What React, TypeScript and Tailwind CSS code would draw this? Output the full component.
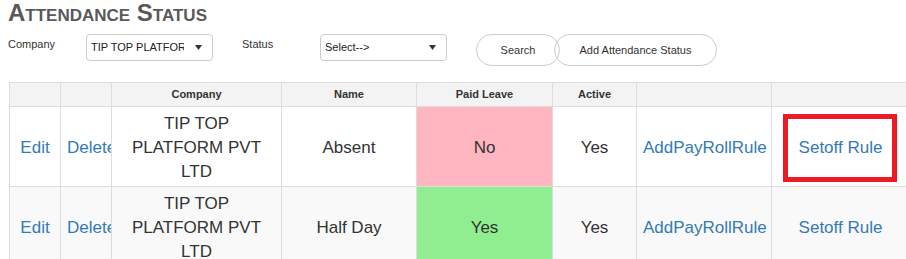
import React from "react";

const rows = [
  { name: "Absent", paid: "No", paidBg: "bg-[#ffb6c1]", rowBg: "bg-white", marked: true },
  { name: "Half Day", paid: "Yes", paidBg: "bg-[#90ee90]", rowBg: "bg-[#f9f9f9]", marked: false },
];

const Caret = () => (
  <svg width="7" height="5" viewBox="0 0 7 5" className="shrink-0">
    <path d="M0 0 H7 L3.5 5 Z" fill="#333" />
  </svg>
);

const FakeSelect = ({ value, textWidth }: { value: string; textWidth: string }) => (
  <div className="flex h-[27px] w-[127px] items-center rounded-[4px] border border-[#ccc] bg-white pl-[4px] pr-[10px] text-[11px] text-[#222]">
    <div className={`${textWidth} overflow-hidden whitespace-nowrap`}>{value}</div>
    <div className="ml-auto">
      <Caret />
    </div>
  </div>
);

export default function App() {
  const font = { fontFamily: '"Liberation Sans", Arial, sans-serif' };
  return (
    <div style={font} className="h-[259px] w-[906px] overflow-hidden bg-white pl-2 text-[#333]">
      <h1 className="text-[24px] font-bold leading-[26px] text-[#595959] [font-variant:small-caps]">
        Attendance Status
      </h1>

      <div className="mt-2 flex items-start">
        <label className="mt-[2px] w-[78px] text-[11px]">Company</label>
        <FakeSelect value="TIP TOP PLATFORM PVT LTD" textWidth="w-[93px]" />
        <label className="ml-[29px] mt-[2px] w-[78px] text-[11px]">Status</label>
        <FakeSelect value="Select-->" textWidth="w-[93px]" />
        <button className="ml-[29px] h-[32px] w-[84px] rounded-full border border-[#ccc] text-[11px] text-[#333]">
          Search
        </button>
        <button className="ml-[-6px] h-[32px] w-[163px] rounded-full border border-[#ccc] text-[11px] text-[#333]">
          Add Attendance Status
        </button>
      </div>

      <table className="ml-px mt-4 w-[900px] table-fixed border-collapse">
        <colgroup>
          <col className="w-[51px]" />
          <col className="w-[51px]" />
          <col className="w-[170px]" />
          <col className="w-[135px]" />
          <col className="w-[136px]" />
          <col className="w-[84px]" />
          <col className="w-[135px]" />
          <col className="w-[138px]" />
        </colgroup>
        <thead>
          <tr className="h-[24px] bg-[#f3f3f3] text-[11px] font-bold">
            <th className="border border-[#ddd]"></th>
            <th className="border border-[#ddd]"></th>
            <th className="border border-[#ddd]">Company</th>
            <th className="border border-[#ddd]">Name</th>
            <th className="border border-[#ddd]">Paid Leave</th>
            <th className="border border-[#ddd]">Active</th>
            <th className="border border-[#ddd]"></th>
            <th className="border border-[#ddd]"></th>
          </tr>
        </thead>
        <tbody className="text-[17px] leading-[24px]">
          {rows.map((r) => (
            <tr key={r.name} className={`h-[80px] ${r.rowBg}`}>
              <td className="overflow-hidden whitespace-nowrap border border-[#ddd] px-2 pt-[2px] text-center text-[#337ab7]">
                Edit
              </td>
              <td className="overflow-hidden whitespace-nowrap border border-[#ddd] pl-[6px] pt-[2px] text-left text-[#337ab7]">
                Delete
              </td>
              <td className="border border-[#ddd] px-2 pt-[2px] text-center">TIP TOP PLATFORM PVT LTD</td>
              <td className="border border-[#ddd] px-2 pt-[2px] text-center">{r.name}</td>
              <td className={`border border-[#ddd] px-2 pt-[2px] text-center ${r.paidBg}`}>{r.paid}</td>
              <td className="border border-[#ddd] px-2 pt-[2px] text-center">Yes</td>
              <td className="overflow-hidden whitespace-nowrap border border-[#ddd] pl-[6px] pt-[2px] text-left text-[#337ab7]">
                AddPayRollRule
              </td>
              <td className="relative border border-[#ddd] px-2 pt-[2px] text-center text-[#337ab7]">
                Setoff Rule
                {r.marked && (
                  <div className="absolute left-[11px] top-[7px] h-[68px] w-[114px] border-[5px] border-[#ed1c24]" />
                )}
              </td>
            </tr>
          ))}
        </tbody>
      </table>
    </div>
  );
}
